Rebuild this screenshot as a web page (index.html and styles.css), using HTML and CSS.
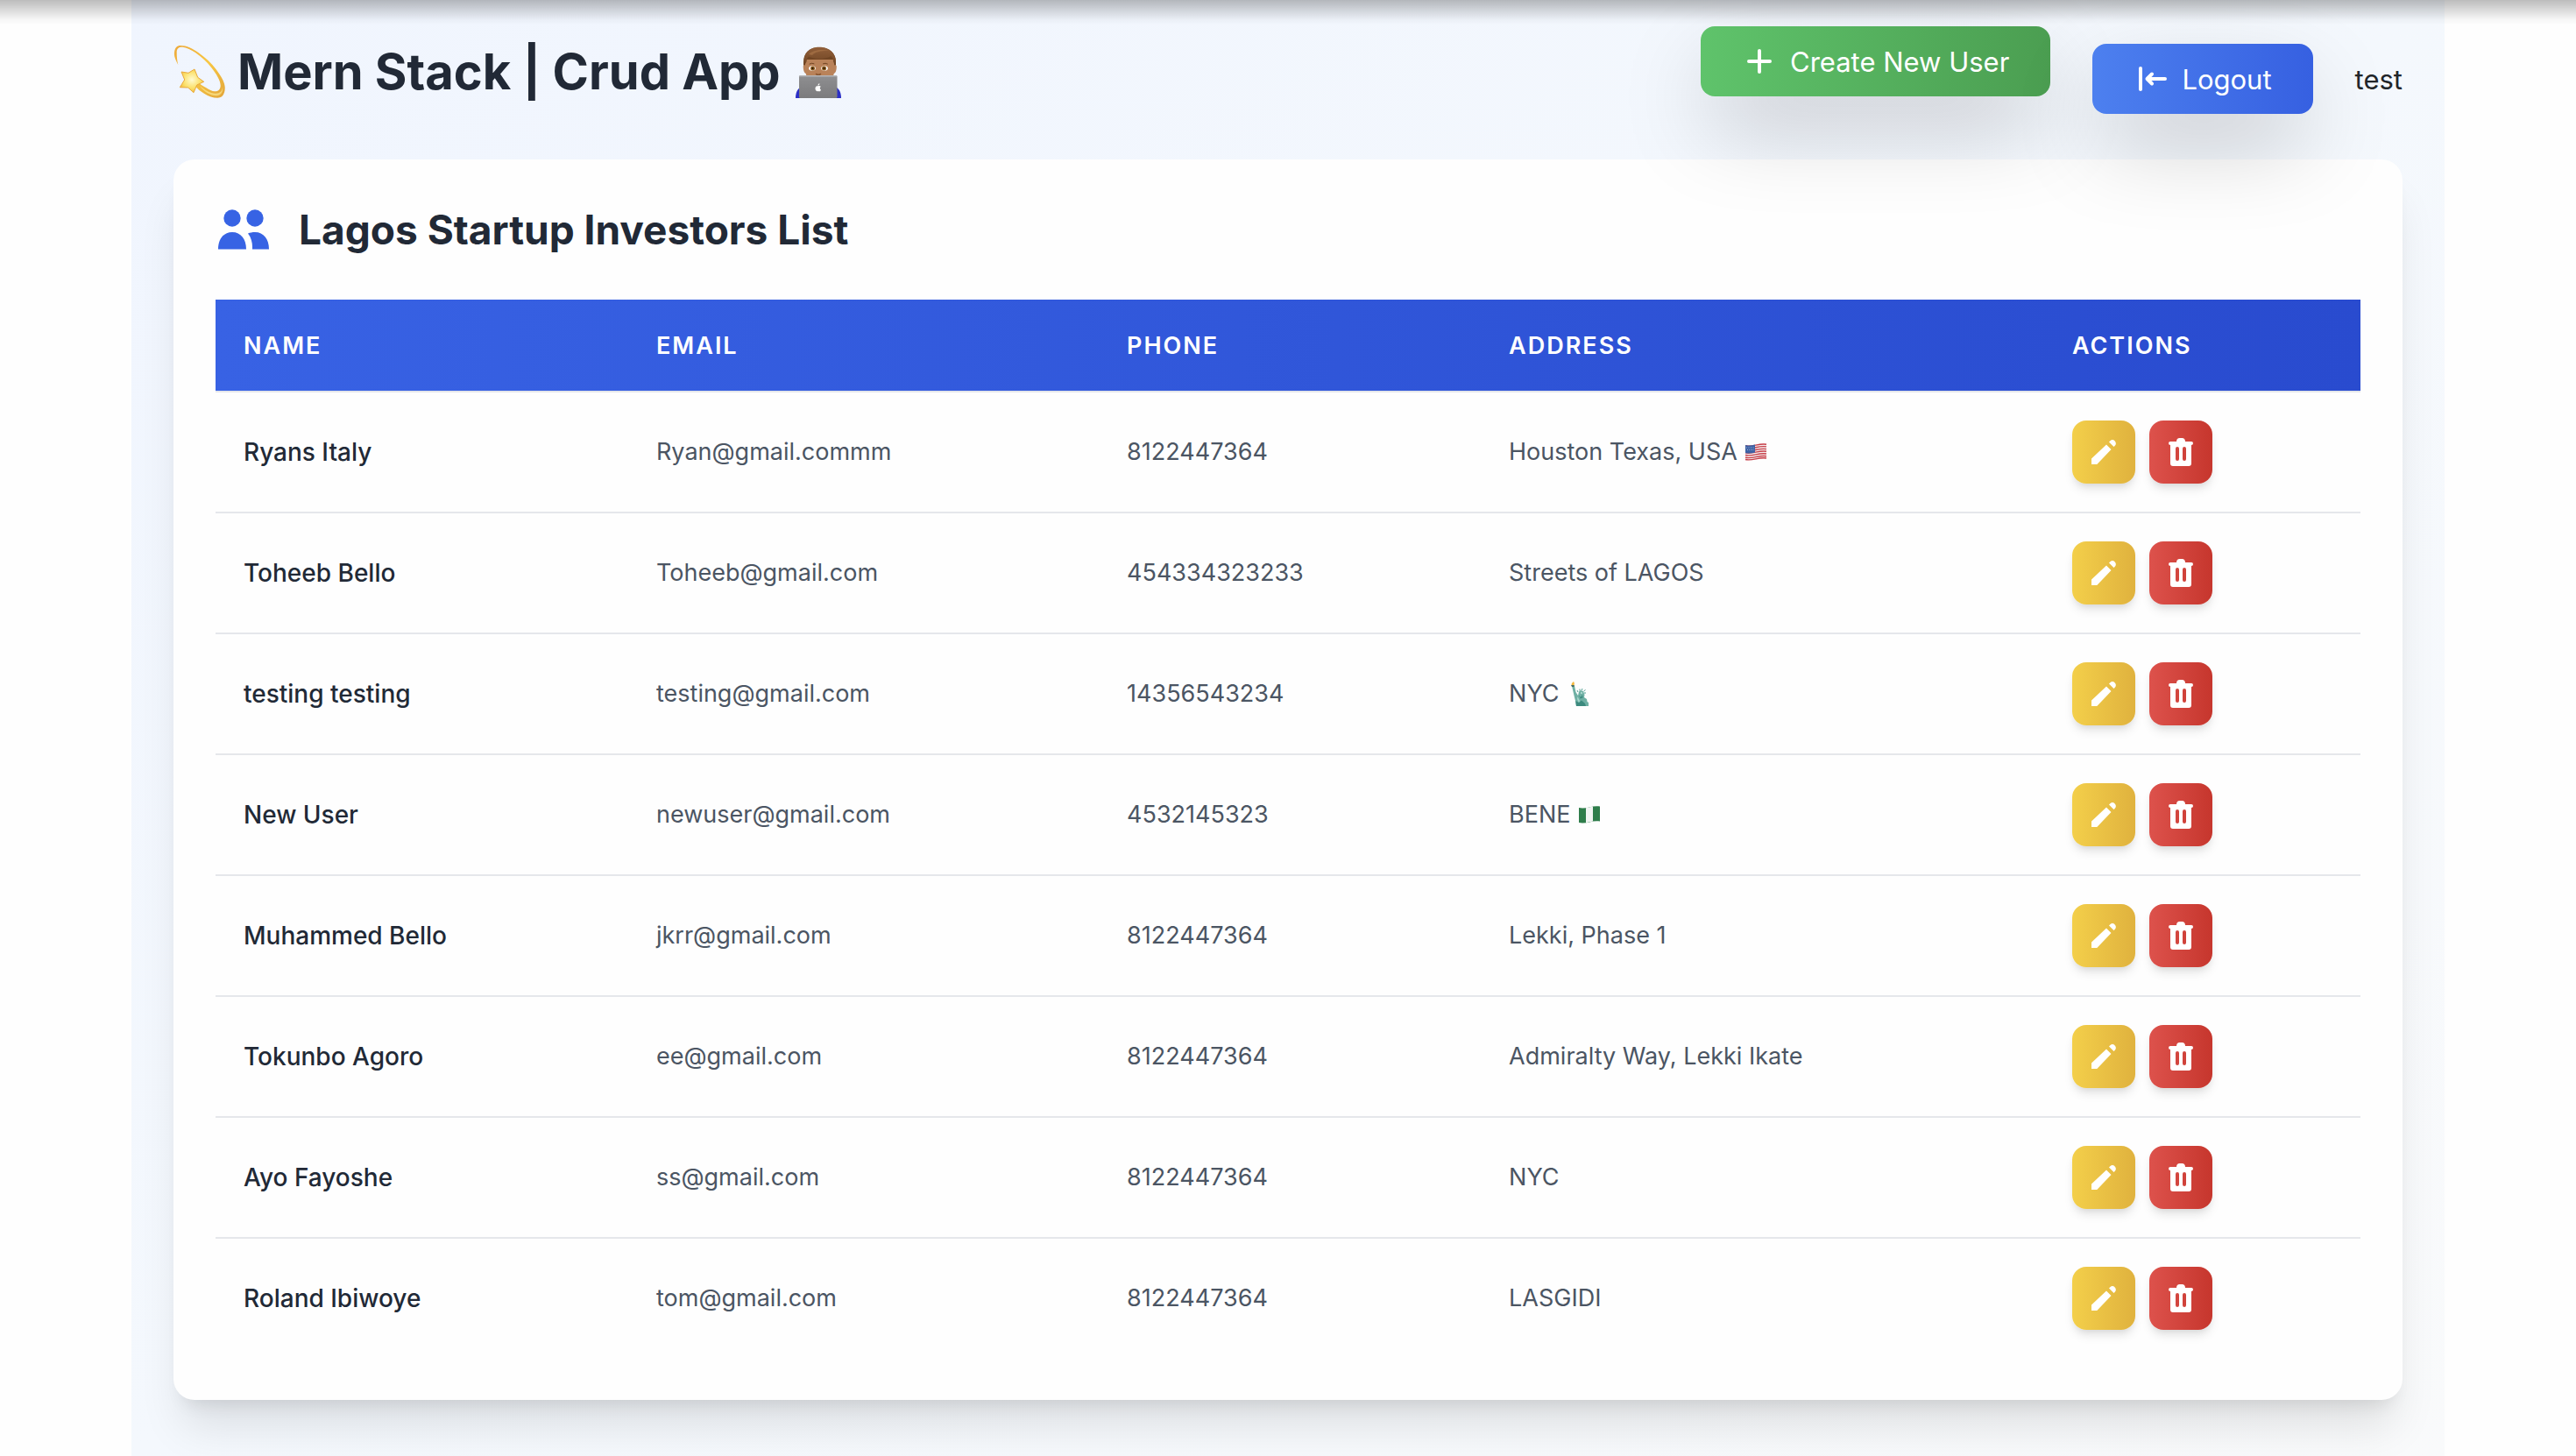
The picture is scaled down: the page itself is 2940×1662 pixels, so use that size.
FILE: index.html
```
<!DOCTYPE html>
<html lang="en">
<head>
<meta charset="utf-8">
<meta name="viewport" content="width=device-width, initial-scale=1">
<title>Mern Stack | Crud App</title>
<link rel="stylesheet" href="styles.css">
</head>
<body>
<svg class="sprite" aria-hidden="true">
  <symbol id="icon-edit" viewBox="0 0 32 32">
    <path d="M2 30v-6.500L19 7.500l5.500 5.500L8.300 30zM22 4.500l1.600-1.500c1.600-1.400 3.600-1.100 4.900.3 1.500 1.500 1.900 3.600.5 5.300L27.500 10z"/>
  </symbol>
  <symbol id="icon-trash" viewBox="0 0 32 32">
    <path fill-rule="evenodd" d="M4 8a2 2 0 0 1 0-4h7c0-2.500 1.500-4 3.500-4h3c2 0 3.500 1.500 3.500 4h7a2 2 0 0 1 0 4v21a3 3 0 0 1-3 3H7a3 3 0 0 1-3-3zM12 10a2 2 0 0 0-2 2v12a2 2 0 0 0 4 0V12a2 2 0 0 0-2-2zM20 10a2 2 0 0 0-2 2v12a2 2 0 0 0 4 0V12a2 2 0 0 0-2-2z"/>
  </symbol>
</svg>

<div class="container">
  <header class="topbar">
    <h1 class="title">
      <svg class="title-emoji" viewBox="0 0 60 60" role="img" aria-label="Dizzy star">
        <defs>
          <linearGradient id="trail" x1="0" y1="0" x2="1" y2="1"><stop offset="0" stop-color="#eda93a"/><stop offset=".5" stop-color="#f8c743"/><stop offset="1" stop-color="#e2a53a"/></linearGradient>
          <radialGradient id="star" cx=".5" cy=".45" r=".6"><stop offset="0" stop-color="#fffbd0"/><stop offset=".6" stop-color="#fbe06a"/><stop offset="1" stop-color="#f0b83c"/></radialGradient>
        </defs>
        <path fill="url(#trail)" d="M5.300 22C2 16 .5 12 1 8 1.500 2.500 4 0 8 0c7 0 14 3.500 20.700 8.300 8 5.700 15 12 20 19 5 7 9.500 13.500 10 20 .4 7.500-2.700 12.400-8.400 12.400C45 59.700 40 58 35.300 55c-4-2.400-8-5.500-10.600-9.300l2.600-5c3 3.300 6 5.300 9.700 7.300 4 2.300 7 4.300 10 4.300 4 0 6.700-2.300 6.700-6.600 0-6-5-13.500-10-20C38 18.500 32 13 25.300 8.300 20.500 5 15 2 10.300 1.700 6 1.500 3.700 3.500 3.700 7.300c0 5 .3 9.700 1.600 14.700z"/>
        <path fill="#fff2a0" opacity=".6" d="M30 46c6 5 12 8.500 18 8.800 5 0 8-3 8-8 1 6-2 10.500-7 10.500C42 57.300 34 52 30 46z"/>
        <path fill="url(#star)" stroke="#e9a93c" stroke-width="1" stroke-linejoin="round" d="M24 27l3.700 9.300 7 5-8 3.700L23 53.700 16.700 48l-9.400-.3L12.700 39 9 30l8 1.300z"/>
      </svg>
      <span>Mern Stack | Crud App</span>
      <svg class="title-emoji" viewBox="0 0 60 60" role="img" aria-label="Technologist">
        <defs>
          <linearGradient id="lid" x1="0" y1="0" x2="0" y2="1"><stop offset="0" stop-color="#8f8f91"/><stop offset="1" stop-color="#7b7b7d"/></linearGradient>
          <linearGradient id="hair" x1="0" y1="0" x2="0" y2="1"><stop offset="0" stop-color="#915f3a"/><stop offset="1" stop-color="#704523"/></linearGradient>
        </defs>
        <path fill="#2b2fc6" d="M4 60c0-6 2-10 5-12h42c3 2 5 6 5 12z"/>
        <path fill="#704523" d="M13 24V19C13 8 20 2 31 2s19 6 19 17v5z"/>
        <path fill="#b98259" d="M12.700 24c0-2 1-2 2-1.500l1.800-6.500h30.500l1.300 6.500c1-.5 2.500-.5 2.500 1.500 0 4-1 7-3 8L46 38H17.500l-1.800-6c-2-1-3-4-3-8z"/>
        <path fill="url(#hair)" d="M14 22C12 10 19 1.800 31 1.800S52 10 49.500 22l-2.500-4c0-3-1-4.500-2.500-6C36 16.500 25 15.500 19 12.500c-2 2-2.500 4-2.500 6z"/>
        <path fill="#a87347" opacity=".7" d="M19 10c4-5 15-6 24-4-7-.5-17 .5-20 5z"/>
        <path stroke="#704523" stroke-width="1" stroke-linecap="round" fill="none" d="M20 21q2.500-1.500 5-.3M35.500 20.700q2.500-1.200 5 .3"/>
        <ellipse cx="23" cy="26" rx="3.800" ry="2.800" fill="#fff"/><ellipse cx="37" cy="26" rx="3.800" ry="2.800" fill="#fff"/>
        <circle cx="23.500" cy="26" r="2.500" fill="#8a5a1c"/><circle cx="36.500" cy="26" r="2.500" fill="#8a5a1c"/>
        <circle cx="23.500" cy="26" r="1" fill="#1c1008"/><circle cx="36.500" cy="26" r="1" fill="#1c1008"/>
        <path stroke="#89552f" stroke-width="1.500" stroke-linecap="round" fill="none" d="M27.500 32.500q2.500 1.500 5 0"/>
        <rect x="8" y="34" width="43.500" height="26" rx="1.500" fill="url(#lid)"/>
        <path fill="#b4b4b6" d="M8 35.500A1.500 1.500 0 0 1 9.500 34H50a1.500 1.500 0 0 1 1.500 1.500z"/>
        <path fill="#fff" d="M29.500 46.300c1-.6 2.500-.6 3.300.4-1.500 1-1.200 3 .2 3.700-.6 1.600-1.600 2.300-3.200 1.700-1.600.6-2.600-.3-3.200-2-.6-2.500.8-4.600 2.900-3.800zM29.500 45.700c0-1.400.7-2.200 1.900-2.500 0 1.500-.7 2.300-1.900 2.500z"/>
      </svg>
    </h1>
    <div class="actions">
      <button class="btn btn-create" type="button">
        <svg class="btn-icon" viewBox="0 0 40 40" aria-hidden="true"><path d="M20 8v24M8 20h24"/></svg>
        Create New User
      </button>
      <button class="btn btn-logout" type="button">
        <svg class="btn-icon" viewBox="0 0 40 40" aria-hidden="true"><path d="M8 8v24M36 20H16M21 14.500L15.500 20l5.500 5.500"/></svg>
        Logout
      </button>
      <span class="username">test</span>
    </div>
  </header>

  <main class="card">
    <h2 class="card-title">
      <svg class="card-icon" viewBox="0 0 64 64" aria-hidden="true">
        <circle cx="19" cy="19" r="9.700"/><circle cx="45" cy="19" r="9.700"/>
        <path d="M3 54.500C3 43 9 35 19 35s16 8 16 19.500zM37 36.500c2.500-1 5-1.500 8-1.500 10 0 16 8 16 19.500H42c.3-7-1-13-5-18z"/>
      </svg>
      Lagos Startup Investors List
    </h2>
    <table class="users">
      <colgroup><col class="col-name"><col class="col-email"><col class="col-phone"><col class="col-address"><col class="col-actions"></colgroup>
      <thead>
        <tr><th scope="col">NAME</th><th scope="col">EMAIL</th><th scope="col">PHONE</th><th scope="col">ADDRESS</th><th scope="col">ACTIONS</th></tr>
      </thead>
      <tbody>
        <tr>
          <td class="name">Ryans Italy</td><td>Ryan@gmail.commm</td><td>8122447364</td>
          <td>Houston Texas, USA
            <svg class="emoji" viewBox="0 0 28 28" role="img" aria-label="Flag of the United States">
              <path fill="#f4eeee" d="M2 6c8 2 15-3 24-1.500v17C17 20 10 25 2 23z"/>
              <path fill="none" stroke="#c8414b" stroke-width="1.400" d="M2 6.700c8 2 15-3 24-1.500M2 9.400c8 2 15-3 24-1.500M2 12.100c8 2 15-3 24-1.500M2 14.800c8 2 15-3 24-1.500M2 17.500c8 2 15-3 24-1.500M2 20.200c8 2 15-3 24-1.500M2 22.500c8 2 15-3 24-1.500"/>
              <path fill="#3e62a5" d="M2 6c4 1 7.500.4 11-.5v9c-3.500 1-7 1.500-11 .5z"/>
              <path stroke="#9fb2d6" stroke-width="1" stroke-dasharray="1 1.500" d="M3 9h9M4 11.500h8"/>
            </svg>
          </td>
          <td><div class="row-actions"><button class="icon-btn edit" type="button" aria-label="Edit Ryans Italy"><svg><use href="#icon-edit"/></svg></button><button class="icon-btn delete" type="button" aria-label="Delete Ryans Italy"><svg><use href="#icon-trash"/></svg></button></div></td>
        </tr>
        <tr>
          <td class="name">Toheeb Bello</td><td>Toheeb@gmail.com</td><td>454334323233</td><td>Streets of LAGOS</td>
          <td><div class="row-actions"><button class="icon-btn edit" type="button" aria-label="Edit Toheeb Bello"><svg><use href="#icon-edit"/></svg></button><button class="icon-btn delete" type="button" aria-label="Delete Toheeb Bello"><svg><use href="#icon-trash"/></svg></button></div></td>
        </tr>
        <tr>
          <td class="name">testing testing</td><td>testing@gmail.com</td><td>14356543234</td>
          <td>NYC
            <svg class="emoji" viewBox="0 0 28 28" role="img" aria-label="Statue of Liberty">
              <path fill="#6fb0a4" d="M7 5h3l1.500 7 2.500 4 1-4.500 2-1.500 3 1 1.500 4-.5 3 3 2 .5 3 1.500 1V28H12l-1-6-1.500-6z"/>
              <path fill="#3c8a7e" d="M12 28l-.8-6 3.800 2 3-2.500 4 3.500 1 3zM15 15l2 3 2-3 .5 3.500-3 1z"/>
              <path fill="#a7d6cb" d="M13.500 17l2.500 5-1 2-2-4zM17 12h2v2h-2z"/>
              <path stroke="#4d9c90" stroke-width="1" d="M14 12l-1-2M16 10.500V8.500M18 10l1-2M20.500 11l2-1.500M21 13h2"/>
              <path fill="#476d63" d="M6 4h4l-.7 2H7z"/><path fill="#f4b83f" d="M6.500 4c0-2 1-3 2.500-4 1 1.500 1 3 .5 4z"/>
            </svg>
          </td>
          <td><div class="row-actions"><button class="icon-btn edit" type="button" aria-label="Edit testing testing"><svg><use href="#icon-edit"/></svg></button><button class="icon-btn delete" type="button" aria-label="Delete testing testing"><svg><use href="#icon-trash"/></svg></button></div></td>
        </tr>
        <tr>
          <td class="name">New User</td><td>newuser@gmail.com</td><td>4532145323</td>
          <td>BENE
            <svg class="emoji" viewBox="0 0 28 28" role="img" aria-label="Flag of Nigeria">
              <path fill="#2f7d4b" d="M2 6c8 2 15-3 24-1.500v17C17 20 10 25 2 23z"/>
              <path fill="#f2f4f3" d="M10 6.200c3-.4 5-1.200 8-1.700v17c-3 .4-5 1.300-8 1.700z"/>
            </svg>
          </td>
          <td><div class="row-actions"><button class="icon-btn edit" type="button" aria-label="Edit New User"><svg><use href="#icon-edit"/></svg></button><button class="icon-btn delete" type="button" aria-label="Delete New User"><svg><use href="#icon-trash"/></svg></button></div></td>
        </tr>
        <tr>
          <td class="name">Muhammed Bello</td><td>jkrr@gmail.com</td><td>8122447364</td><td>Lekki, Phase 1</td>
          <td><div class="row-actions"><button class="icon-btn edit" type="button" aria-label="Edit Muhammed Bello"><svg><use href="#icon-edit"/></svg></button><button class="icon-btn delete" type="button" aria-label="Delete Muhammed Bello"><svg><use href="#icon-trash"/></svg></button></div></td>
        </tr>
        <tr>
          <td class="name">Tokunbo Agoro</td><td>ee@gmail.com</td><td>8122447364</td><td>Admiralty Way, Lekki Ikate</td>
          <td><div class="row-actions"><button class="icon-btn edit" type="button" aria-label="Edit Tokunbo Agoro"><svg><use href="#icon-edit"/></svg></button><button class="icon-btn delete" type="button" aria-label="Delete Tokunbo Agoro"><svg><use href="#icon-trash"/></svg></button></div></td>
        </tr>
        <tr>
          <td class="name">Ayo Fayoshe</td><td>ss@gmail.com</td><td>8122447364</td><td>NYC</td>
          <td><div class="row-actions"><button class="icon-btn edit" type="button" aria-label="Edit Ayo Fayoshe"><svg><use href="#icon-edit"/></svg></button><button class="icon-btn delete" type="button" aria-label="Delete Ayo Fayoshe"><svg><use href="#icon-trash"/></svg></button></div></td>
        </tr>
        <tr>
          <td class="name">Roland Ibiwoye</td><td>tom@gmail.com</td><td>8122447364</td><td>LASGIDI</td>
          <td><div class="row-actions"><button class="icon-btn edit" type="button" aria-label="Edit Roland Ibiwoye"><svg><use href="#icon-edit"/></svg></button><button class="icon-btn delete" type="button" aria-label="Delete Roland Ibiwoye"><svg><use href="#icon-trash"/></svg></button></div></td>
        </tr>
      </tbody>
    </table>
  </main>
</div>
</body>
</html>
```
FILE: styles.css
```
*, *::before, *::after { box-sizing: border-box; }

body {
  margin: 0;
  background: #fefefe;
  color: #212529;
  font-family: Inter, "Liberation Sans", sans-serif;
  font-size: 31px;
}

/* Shade cast along the top edge of the window */
body::before {
  content: "";
  position: fixed;
  inset: 0 0 auto;
  height: 28px;
  background: linear-gradient(rgba(0, 0, 0, .26), rgba(0, 0, 0, .13) 45%, rgba(0, 0, 0, .03) 80%, transparent);
  pointer-events: none;
  z-index: 10;
}

.sprite { position: absolute; width: 0; height: 0; }

.container {
  max-width: 2640px;
  min-height: 100vh;
  margin: 0 auto;
  padding: 30px 48px 64px;
  overflow: hidden;
  background: linear-gradient(to bottom right, #f0f5fe, #f4f8fd 50%, #f9fafb);
}

.topbar {
  display: flex;
  align-items: center;
  justify-content: space-between;
  margin-bottom: 32px;
}

.title {
  display: flex;
  align-items: center;
  gap: 13px;
  margin: 0 0 16px;
  color: #212936;
  font-size: 56px;
  font-weight: 700;
  line-height: 72px;
}
.title-emoji { width: 60px; height: 60px; }

.actions {
  display: flex;
  align-items: center;
  gap: 48px;
  position: relative;
  z-index: 1;
}

.btn {
  display: flex;
  align-items: center;
  gap: 15px;
  height: 80px;
  padding: 0 47px;
  border: 0;
  border-radius: 16px;
  color: #fff;
  font: inherit;
  box-shadow: 0 40px 100px -12px rgba(0, 0, 0, .25);
}
.btn-create { margin-bottom: 40px; background: linear-gradient(to right, #5fc36b, #4b9e51); }
.btn-logout { background: linear-gradient(to right, #4d80ef, #3660e1); }
.btn-icon {
  width: 40px;
  height: 40px;
  fill: none;
  stroke: #fff;
  stroke-width: 4;
  stroke-linecap: round;
  stroke-linejoin: round;
}

.card {
  padding: 48px;
  border-radius: 24px;
  background: #fefefe;
  box-shadow: 0 40px 50px -10px rgba(0, 0, 0, .1), 0 16px 20px -12px rgba(0, 0, 0, .1);
}

.card-title {
  display: flex;
  align-items: center;
  gap: 31px;
  margin: 0 0 48px;
  color: #212936;
  font-size: 46px;
  font-weight: 700;
  line-height: 64px;
}
.card-icon { width: 64px; height: 64px; fill: #3763e4; }

.users {
  width: 100%;
  border-collapse: separate;
  border-spacing: 0;
  table-layout: fixed;
  text-align: left;
}
.col-name { width: 19.24%; }
.col-email { width: 21.94%; }
.col-phone { width: 17.81%; }
.col-address { width: 26.26%; }
.col-actions { width: 14.75%; }

.users thead tr { background: linear-gradient(to right, #3862e4, #294bcf); }
.users th {
  padding: 33px 32px 31px;
  color: #fff;
  font-size: 27px;
  font-weight: 600;
  letter-spacing: 2px;
  line-height: 40px;
}
.users td {
  padding: 32px;
  border-top: 2px solid #e5e7eb;
  color: #4b5563;
  font-size: 27px;
  line-height: 40px;
}
.users .name { color: #212936; font-size: 28px; font-weight: 500; }

.emoji { width: 28px; height: 28px; margin: -4px 0; vertical-align: -1px; }

.row-actions { display: flex; gap: 16px; }
.icon-btn {
  display: grid;
  place-items: center;
  width: 72px;
  height: 72px;
  padding: 0;
  border: 0;
  border-radius: 16px;
  box-shadow: 0 8px 12px -2px rgba(0, 0, 0, .1), 0 4px 8px -4px rgba(0, 0, 0, .1);
}
.icon-btn svg { width: 32px; height: 32px; fill: #fff; }
.edit { background: linear-gradient(to right, #f3cf4a, #e0b23e); }
.delete { background: linear-gradient(to right, #dd524c, #c6362d); }
```
